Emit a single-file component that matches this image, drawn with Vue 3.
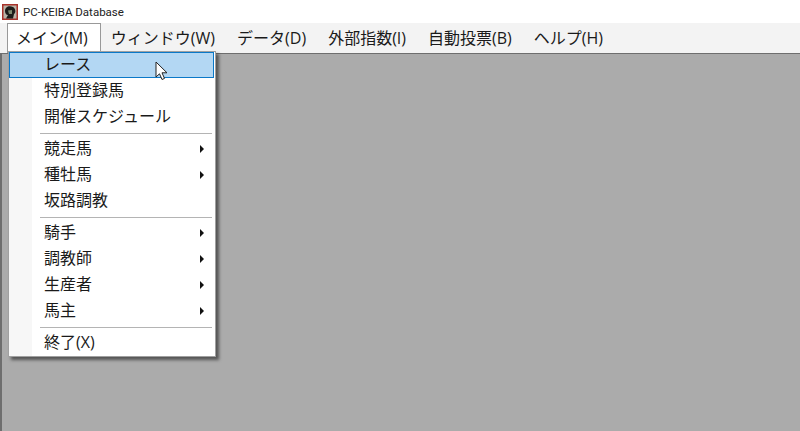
<script setup>
const menus = [
  { label: 'メイン(M)', active: true },
  { label: 'ウィンドウ(W)' },
  { label: 'データ(D)' },
  { label: '外部指数(I)' },
  { label: '自動投票(B)' },
  { label: 'ヘルプ(H)' }
]

const groups = [
  [
    { label: 'レース', hover: true },
    { label: '特別登録馬' },
    { label: '開催スケジュール' }
  ],
  [
    { label: '競走馬', sub: true },
    { label: '種牡馬', sub: true },
    { label: '坂路調教' }
  ],
  [
    { label: '騎手', sub: true },
    { label: '調教師', sub: true },
    { label: '生産者', sub: true },
    { label: '馬主', sub: true }
  ],
  [{ label: '終了(X)' }]
]
</script>

<template>
  <div class="window">
    <div class="titlebar">
      <svg class="appicon" width="16" height="16" viewBox="0 0 16 16">
        <rect x="0" y="0" width="16" height="16" fill="#a8322a" />
        <rect x="1.5" y="1.5" width="13" height="13" fill="#b9b4a8" />
        <path d="M3 7 C3 3 7 1 11 3 C14 5 14 9 12 10 L11 14.5 L4 14.5 L6 11 C4 11 3 9 3 7 Z" fill="#1c1c1a" />
        <path d="M6 6.5 L10 6 L10 10 L7 10 Z" fill="#7d8a70" />
      </svg>
      <span class="title">PC-KEIBA Database</span>
    </div>

    <nav class="menubar">
      <div
        v-for="m in menus"
        :key="m.label"
        class="menu"
        :class="{ active: m.active }"
      >{{ m.label }}</div>
    </nav>

    <main class="client">
      <div class="dropdown">
        <template v-for="(group, i) in groups" :key="i">
          <div v-if="i > 0" class="sep"></div>
          <div
            v-for="item in group"
            :key="item.label"
            class="item"
            :class="{ hover: item.hover }"
          >
            <span class="label">{{ item.label }}</span>
            <span v-if="item.sub" class="arrow"></span>
          </div>
        </template>
      </div>

      <svg class="cursor" width="14" height="21" viewBox="0 0 14 21">
        <path d="M1 1 L1 16 L4.5 12.8 L7 18.5 L9.5 17.4 L7 11.8 L12 11.8 Z" fill="#fff" stroke="#222" stroke-width="1" />
      </svg>
    </main>
  </div>
</template>

<style scoped>
.window {
  width: 800px;
  height: 431px;
  display: flex;
  flex-direction: column;
  overflow: hidden;
  font-family: "Open Sans", "Noto Sans CJK JP", sans-serif;
  color: #1a1a1a;
}

.titlebar {
  height: 23px;
  flex: none;
  background: #fff;
  display: flex;
  align-items: center;
  padding-left: 2px;
  gap: 5px;
}

.appicon {
  flex: none;
}

.title {
  font-family: Roboto, sans-serif;
  font-size: 11.5px;
  color: #222;
}

.menubar {
  height: 30px;
  flex: none;
  box-sizing: border-box;
  background: #f3f3f3;
  display: flex;
  padding-left: 7px;
  font-size: 16px;
}

.menu {
  padding: 0 11px 0 9px;
  line-height: 29px;
  white-space: nowrap;
  border: 1px solid transparent;
  border-bottom: none;
}

.menu.active {
  padding: 0 12px 0 8px;
  background: #fff;
  border-color: #999;
  position: relative;
  z-index: 2;
}

.client {
  flex: 1;
  position: relative;
  background: #ababab;
  border-top: 1px solid #6e6e6e;
  border-left: 2px solid #6e6e6e;
}

.dropdown {
  position: absolute;
  left: 6px;
  top: -3px;
  width: 208px;
  box-sizing: border-box;
  padding: 0 1px 0 0;
  border: 1px solid #a0a0a0;
  background: linear-gradient(to right, #f7f7f7 23px, #fff 23px);
  box-shadow: 3px 3px 3px rgba(0, 0, 0, 0.5);
  z-index: 3;
  font-size: 16px;
}

.item {
  height: 26px;
  box-sizing: border-box;
  display: flex;
  align-items: center;
  justify-content: space-between;
  padding: 0 10px 4px 35px;
  white-space: nowrap;
}

.item.hover {
  background: #b3d7f3;
  border: 1px solid #0a78c8;
  padding-left: 34px;
  padding-bottom: 4px;
}

.arrow {
  width: 0;
  height: 0;
  margin-top: 4px;
  border-left: 4px solid #111;
  border-top: 4px solid transparent;
  border-bottom: 4px solid transparent;
}

.sep {
  height: 1px;
  margin: 3px 2px 2px 31px;
  background: #b4b4b4;
}

.cursor {
  position: absolute;
  left: 153px;
  top: 7px;
  z-index: 4;
}
</style>

<style>
html, body {
  margin: 0;
  background: #fff;
}
</style>
